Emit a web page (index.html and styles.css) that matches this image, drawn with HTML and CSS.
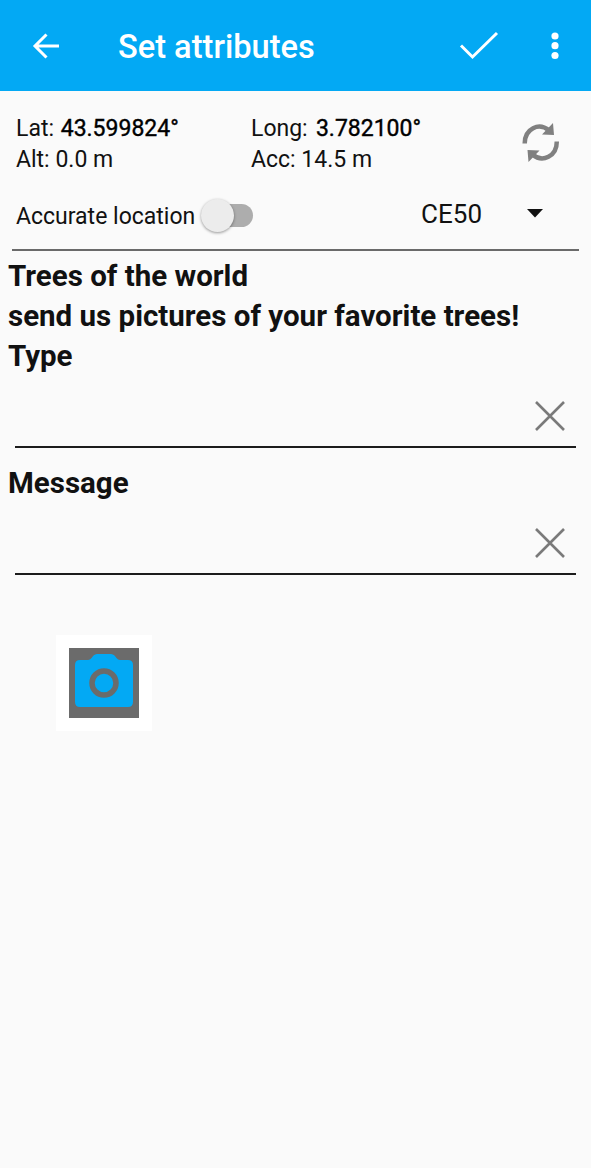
FILE: index.html
```html
<!DOCTYPE html>
<html lang="en">
<head>
    <meta charset="UTF-8">
    <meta name="viewport" content="width=device-width, initial-scale=1.0">
    <title>Set attributes</title>
    <link rel="stylesheet" href="styles.css">
</head>
<body>
    <header class="toolbar">
        <svg class="icon-back" width="28" height="26" viewBox="0 0 28 26">
            <path d="M27 13H3M14.500 1.500L3 13L14.500 24.500"/>
        </svg>
        <h1 class="title">Set attributes</h1>
        <svg class="icon-check" width="40" height="30" viewBox="0 0 40 30">
            <path d="M2 14.5L13.5 26L38 2"/>
        </svg>
        <svg class="icon-more" width="8" height="28" viewBox="0 0 8 28">
            <circle cx="4" cy="4" r="3.6"/>
            <circle cx="4" cy="13.7" r="3.6"/>
            <circle cx="4" cy="23.5" r="3.6"/>
        </svg>
    </header>

    <section class="location">
        <div class="coords">
            <div class="column">
                <div>Lat: <span class="value">43.599824°</span></div>
                <div>Alt: 0.0 m</div>
            </div>
            <div class="column">
                <div>Long: <span class="value long">3.782100°</span></div>
                <div>Acc: 14.5 m</div>
            </div>
            <svg class="icon-refresh" width="38" height="40" viewBox="0 0 38 40">
                <path class="arc" d="M2.7 20.500C2.7 5.500 17 -1 27 7.5M34.800 18.500C34.800 33.5 20.500 40 10.500 31.500"/>
                <path class="head" d="M31 0L32 12L20 11.500ZM6.500 39L5.500 27L17.500 27.500Z"/>
            </svg>
        </div>
        <div class="options">
            <label class="accurate">Accurate location</label>
            <div class="switch"><div class="thumb"></div></div>
            <div class="select">CE50</div>
            <svg class="icon-drop" width="16" height="9" viewBox="0 0 16 9">
                <path d="M0 0H16L8 8.500Z"/>
            </svg>
        </div>
    </section>

    <main class="form">
        <h2>Trees of the world</h2>
        <h2>send us pictures of your favorite trees!</h2>
        <div class="form-group">
            <h2>Type</h2>
            <div class="field">
                <svg class="icon-clear" width="30" height="30" viewBox="0 0 30 30">
                    <path d="M1 1L29 29M29 1L1 29"/>
                </svg>
            </div>
        </div>
        <div class="form-group">
            <h2>Message</h2>
            <div class="field">
                <svg class="icon-clear" width="30" height="30" viewBox="0 0 30 30">
                    <path d="M1 1L29 29M29 1L1 29"/>
                </svg>
            </div>
        </div>
        <div class="photo">
            <svg width="70" height="70" viewBox="0 0 70 70">
                <rect width="70" height="70" fill="#6b6b6b"/>
                <path fill="#03a9f4" d="M11 12H19Q21 12 22.500 10L24.500 7.500Q26 6 28 6H42Q44 6 45.500 7.500L47.500 10Q49 12 51 12H59Q64 12 64 17V54Q64 59 59 59H11Q6 59 6 54V17Q6 12 11 12Z"/>
                <circle cx="35" cy="35" r="12" fill="none" stroke="#6b6b6b" stroke-width="5.500"/>
            </svg>
        </div>
    </main>
</body>
</html>
```

FILE: styles.css
```css
body {
    background-color: #fafafa;
    color: #111;
    font-family: Roboto, sans-serif;
    margin: 0;
}

svg {
    display: block;
    flex-shrink: 0;
}

.toolbar {
    display: flex;
    align-items: center;
    box-sizing: border-box;
    height: 91px;
    padding: 0 32px 0 32px;
    background-color: #03a9f4;
}

.title {
    flex-grow: 1;
    margin: 3px 0 0 58px;
    color: white;
    font-size: 32.6px;
    font-weight: 500;
}

.icon-back,
.icon-check {
    fill: none;
    stroke: white;
    stroke-width: 3;
}

.icon-more {
    margin-left: 52px;
    fill: white;
}

.location {
    height: 158px;
    margin: 0 12px;
    border-bottom: 2px solid #6a6a6a;
    font-size: 23px;
}

.coords {
    display: flex;
    padding: 22px 20px 0 4px;
    line-height: 31px;
}

.column {
    flex-shrink: 0;
    width: 235px;
}

.value {
    margin-left: 1px;
    color: #000;
    -webkit-text-stroke: 0.4px #000;
}

.long {
    margin-left: 2.5px;
}

.icon-refresh {
    margin: 10px 0 0 36px;
}

.icon-refresh .arc {
    fill: none;
    stroke: #808080;
    stroke-width: 4.5;
}

.icon-refresh .head {
    fill: #808080;
}

.options {
    display: flex;
    align-items: center;
    height: 50px;
    padding: 15px 36px 0 4px;
}

.accurate {
    margin-top: 2px;
}

.switch {
    width: 44px;
    height: 23px;
    margin-left: 14px;
    border-radius: 12px;
    background-color: #adadad;
}

.thumb {
    width: 33px;
    height: 33px;
    margin: -5px 0 0 -8px;
    border-radius: 50%;
    background-color: #ececec;
    box-shadow: 0 1px 3px rgba(0, 0, 0, 0.4);
}

.select {
    margin: -3px 0 0 auto;
    font-size: 26px;
}

.icon-drop {
    margin: -3px 0 0 45px;
    fill: #111;
}

.form {
    padding: 4px 15px 0 9px;
}

h2 {
    margin: 0 0 0 -1px;
    padding-top: 2px;
    font-size: 29.5px;
    font-weight: 700;
    line-height: 38px;
}

.form-group {
    height: 127px;
}

.field {
    display: flex;
    align-items: center;
    justify-content: flex-end;
    height: 60px;
    padding: 11px 11px 0 0;
    margin-left: 6px;
    border-bottom: 2px solid #1c1c1c;
}

.icon-clear {
    fill: none;
    stroke: #7a7a7a;
    stroke-width: 2.6;
}

.photo {
    width: 70px;
    margin: 46px 0 0 47px;
    padding: 13px;
    background-color: white;
}
```
